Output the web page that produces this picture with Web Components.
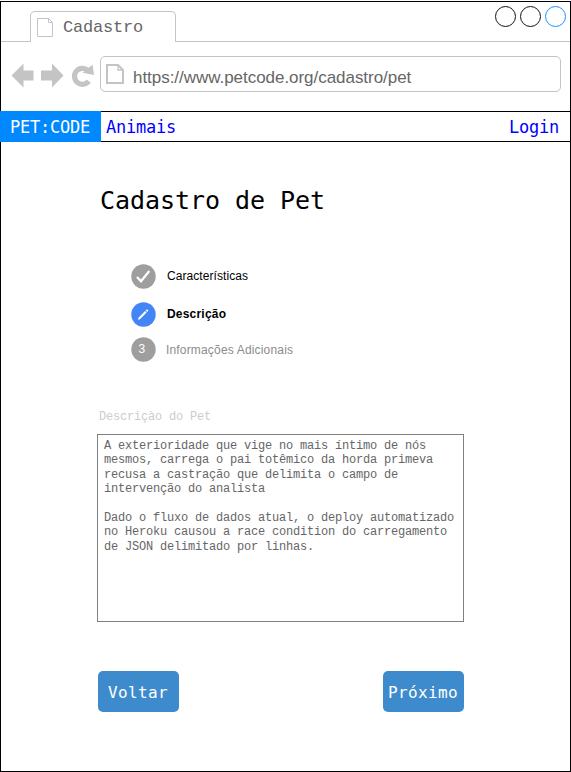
<!DOCTYPE html>
<html lang="pt-BR">
<head>
<meta charset="utf-8">
<title>Cadastro</title>
<style>
html,body{margin:0;background:#fff}
</style>
</head>
<body>
<pet-window></pet-window>
<script>
const define=(name,html)=>customElements.define(name,class extends HTMLElement{
  constructor(){super();this.attachShadow({mode:'open'}).innerHTML=html;}
});

define('tab-strip',`<style>
:host{display:flex;height:41px;box-sizing:border-box;position:relative;align-items:flex-end}
.lead{width:29px;height:1px;background:#c4c4c4}
.rest{flex:1;height:1px;background:#c4c4c4}
.tab{width:146px;height:31px;box-sizing:border-box;border:1px solid #c4c4c4;border-bottom:0;border-radius:5px 5px 0 0;display:flex;align-items:flex-start;padding-left:5px;font:17px/20px "Liberation Mono",monospace;letter-spacing:-.2px;color:#666}
.tab span{padding-top:6px}
svg{display:block;width:18px;height:21px;margin:4px 9px 0 0;flex:none}
.dots{position:absolute;right:3px;top:4px;display:flex;gap:3px}
.dots svg{width:22px;height:22px;margin:0}
</style>
<div class="lead"></div>
<div class="tab"><svg viewBox="0 0 18 21" fill="none" stroke="#c4c4c4"><path d="M1.500 2.500h11l4 4v14h-15zM12.500 2.500v4h4"/></svg><span>Cadastro</span></div>
<div class="rest"></div>
<div class="dots"><svg fill="none" stroke="#111"><circle cx="10.500" cy="11.500" r="10"/></svg><svg fill="none" stroke="#111"><circle cx="10.500" cy="11.500" r="10"/></svg><svg fill="none" stroke="#1a8fff"><circle cx="10.500" cy="11.500" r="10"/></svg></div>`);

define('address-bar',`<style>
:host{display:flex;height:69px;box-sizing:border-box;padding:14px 9px 0 10px;align-items:flex-start}
.nav{display:block;width:84px;height:28px;margin:5px 5px 0 0;flex:none}
.field{flex:1;height:36px;box-sizing:border-box;border:1px solid #c4c4c4;border-radius:5px;display:flex;align-items:center;font:17px/20px "Liberation Sans",sans-serif;letter-spacing:-.04px;color:#666}
.field svg{width:20px;height:22px;margin:0 8px 0 4px;flex:none}
span{padding-top:7px}
</style>
<svg class="nav" viewBox="0 0 84 28" fill="#c4c4c4"><path d="M.5 14.500L12.500 2.500v7h10v10h-10v7z"/><path d="M52.500 14.500L41 2.500v7H30v10h11v7z"/><path d="M77.800 20.200A8 8 0 1 1 76.800 9.300" fill="none" stroke="#c4c4c4" stroke-width="5.200"/><path d="M81.500 3.700L83 14l-11.500-2.300z"/></svg>
<div class="field"><svg viewBox="0 0 20 22" fill="none" stroke="#c4c4c4" stroke-width="2"><path d="M2 2h11l5 5v13H2z"/><path d="M13 2v5h5" stroke-width="1.300"/></svg><span>https://www.petcode.org/cadastro/pet</span></div>`);

define('site-nav',`<style>
:host{display:flex;box-sizing:border-box;height:31px;border:solid #000;border-width:1px 0;font:17px/31px "DejaVu Sans Mono",monospace;letter-spacing:-.234px;color:#00f}
b{font-weight:400;background:#0089ff;color:#fff;width:101px;margin:-1px 0 -1px -1px;padding-left:10px;box-sizing:border-box;height:31px;line-height:33px}
a{padding:0 11px 0 5px}
a:last-child{margin-left:auto}
</style><b>PET:CODE</b><a>Animais</a><a>Login</a>`);

define('step-item',`<style>
:host{display:flex;align-items:center;height:24px;font:12px/14px "Liberation Sans",sans-serif;letter-spacing:.07px;color:#000}
:host([current]){font-weight:700;letter-spacing:.2px}
:host([pending]){color:#8c8c8c;letter-spacing:.17px}
.disc{width:25px;height:25px;clip-path:circle(12.2px);background:#9e9e9e;color:#fff;margin:0 11px -1px 0;display:flex;align-items:center;justify-content:center;flex:none}
:host([current]) .disc{background:#4285f4}
:host([pending]) .disc{margin-right:10px;padding:0 3px 1px 0;box-sizing:border-box}
:host([pending]) .text{padding-top:2px}
</style><div class="disc"><slot name="icon"></slot></div><span class="text"><slot></slot></span>`);

define('text-panel',`<style>
:host{display:block;font:12px/14.4px "Liberation Mono",monospace;letter-spacing:-.2px;color:#666}
label{display:block;box-sizing:border-box;color:#ccc;padding:1px 0 0 2px;height:25px}
.box{box-sizing:border-box;width:367px;height:188px;border:1px solid #808080;padding:4px 6px}
p{margin:0 0 14.4px;white-space:pre}
</style><label><slot name="label"></slot></label><div class="box"><p>A exterioridade que vige no mais íntimo de nós
mesmos, carrega o pai totêmico da horda primeva
recusa a castração que delimita o campo de
intervenção do analista</p><p>Dado o fluxo de dados atual, o deploy automatizado
no Heroku causou a race condition do carregamento
de JSON delimitado por linhas.</p></div>`);

define('action-button',`<style>
:host{display:block}
button{display:block;width:81px;height:41px;border:0;border-radius:5px;padding:2px 1px 0 0;background:#3d8bcd;color:#fff;font:16px/20px "DejaVu Sans Mono",monospace;letter-spacing:.37px;white-space:nowrap}
</style><button><slot></slot></button>`);

define('pet-form',`<style>
:host{display:block;padding:43px 106px 0 96px}
h1{margin:0 0 0 3px;font:25px/32px "DejaVu Sans Mono",monospace;font-weight:400;letter-spacing:-.05px;color:#000}
.steps{padding:47px 0 0 34px;height:192px;box-sizing:border-box}
step-item+step-item{margin-top:14px}
step-item+step-item+step-item{margin-top:11px}
step-item svg{width:25px;height:25px;display:block}
.actions{display:flex;justify-content:space-between;padding:49px 0 0 1px}
</style>
<h1>Cadastro de Pet</h1>
<div class="steps">
<step-item><svg slot="icon" viewBox="0 0 25 25" fill="none" stroke="#fff" stroke-width="2.300"><path d="M6 13l4 4.200 8.300-10.200"/></svg>Características</step-item>
<step-item current><svg slot="icon" viewBox="0 0 25 25" fill="#fff"><path d="M7 17.700l.5-2 6.600-6.600 1.500 1.500-6.600 6.600zM14.700 8.500l.9-.9q.4-.3.800 0l.7.700q.3.400 0 .8l-.9.900z"/></svg>Descrição</step-item>
<step-item pending><span slot="icon">3</span>Informações Adicionais</step-item>
</div>
<text-panel><span slot="label">Descriçào do Pet</span></text-panel>
<div class="actions"><action-button>Voltar</action-button><action-button>Próximo</action-button></div>`);

define('pet-window',`<style>
:host{display:block;box-sizing:border-box;width:571px;height:772px;padding-top:1px}
.frame{box-sizing:border-box;height:771px;border:1px solid #000}
tab-strip{margin-top:-1px}
</style><div class="frame"><tab-strip></tab-strip><address-bar></address-bar><site-nav></site-nav><pet-form></pet-form></div>`);
</script>
</body>
</html>
